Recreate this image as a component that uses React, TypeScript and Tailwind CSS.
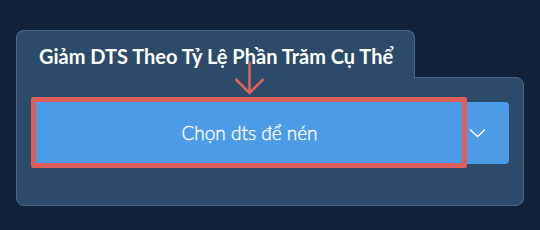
import React from "react";

export default function App() {
  return (
    <div
      className="relative w-[540px] h-[230px] bg-[#112238] pt-[30px] pl-[16px]"
      style={{ fontFamily: "Lato, 'Open Sans', sans-serif" }}
    >
      <div className="w-[508px]">
        <div className="relative z-10 w-[399px] h-[48px] -mb-px bg-[#2d4a69] border border-b-0 border-[#4e6986] rounded-t-[8px] pl-[22px] pt-[13px]">
          <div className="text-white font-bold text-[20px] leading-[24px] whitespace-nowrap">
            Giảm DTS Theo Tỷ Lệ Phần Trăm Cụ Thể
          </div>
        </div>
        <div className="h-[129px] bg-[#2d4a69] border border-[#4e6986] rounded-b-[8px] rounded-tr-[8px] pl-[16px] pt-[24px]">
          <div className="relative flex w-[476px] h-[62px] rounded-[4px] bg-[#4b9be6]">
            <div className="w-[433px] h-full flex items-center justify-center text-white text-[19px] font-light [-webkit-text-stroke:0.35px_white]">
              Chọn dts để nén
            </div>
            <div className="flex-1 h-full flex items-center pl-[3px]">
              <svg width="17" height="10" viewBox="0 0 17 10" fill="none">
                <path d="M1 1.5 L8.5 8.5 L16 1.5" stroke="white" strokeWidth="1.4" />
              </svg>
            </div>
            <div className="absolute left-[-2px] top-[-5px] w-[436px] h-[71px] border-[5px] border-[#dd5f5b] rounded-[2px]" />
          </div>
        </div>
      </div>
      <svg className="absolute left-0 top-0 z-20" width="540" height="230" viewBox="0 0 540 230" fill="none">
        <path d="M249.5 62 V93" stroke="#e0625c" strokeWidth="2.5" />
        <path d="M235.5 79 L249.5 93 L263.5 79" stroke="#e0625c" strokeWidth="2.5" />
      </svg>
    </div>
  );
}
